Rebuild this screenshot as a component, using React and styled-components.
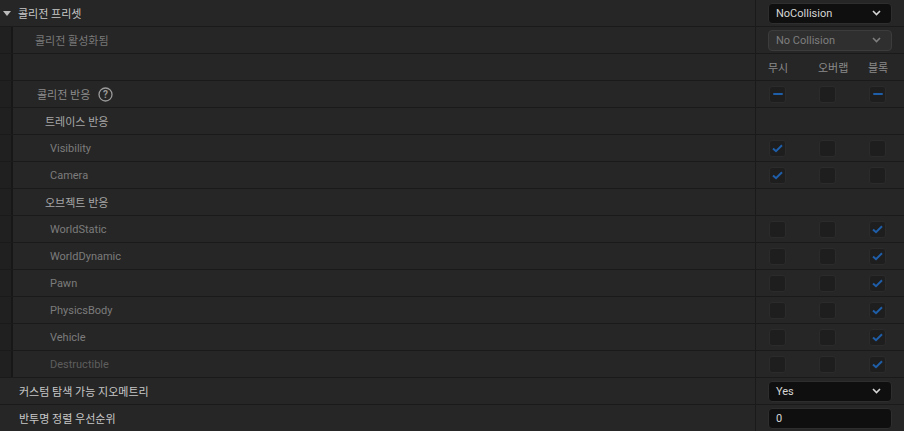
import React from "react";
import styled, { createGlobalStyle } from "styled-components";

const GlobalStyle = createGlobalStyle`
  html, body {
    margin: 0;
    padding: 0;
    background: #262626;
    font-family: "Roboto", "Noto Sans CJK KR", "Noto Sans", sans-serif;
  }
`;

const Panel = styled.div`
  width: 904px;
  height: 431px;
  overflow: hidden;
  background: #262626;
`;

const Row = styled.div`
  display: grid;
  grid-template-columns: 755px 1px 1fr;
  height: 26px;
  border-bottom: 1px solid #1a1a1a;
`;

const NameCell = styled.div`
  display: flex;
  align-items: center;
  min-width: 0;
`;

const Indent = styled.div`
  width: 11px;
  align-self: stretch;
  background: #202020;
  border-right: 2px solid #171717;
  flex-shrink: 0;
`;

const Label = styled.span`
  font-size: 11px;
  color: ${(p) => p.$color || "#c8c8c8"};
  padding-left: ${(p) => p.$pad}px;
  display: flex;
  align-items: center;
  gap: 8px;
  white-space: nowrap;
`;

const Divider = styled.div`
  background: #1a1a1a;
`;

const ValueCell = styled.div`
  display: flex;
  align-items: center;
  padding-left: 12px;
`;

const Arrow = styled.span`
  width: 0;
  height: 0;
  margin-left: 3px;
  border-left: 4.5px solid transparent;
  border-right: 4.5px solid transparent;
  border-top: 5px solid #bcbcbc;
`;

const Combo = styled.div`
  width: 124px;
  height: 21px;
  box-sizing: border-box;
  border-radius: 4px;
  border: 1px solid ${(p) => (p.$disabled ? "#3c3c3c" : "#2e2e2e")};
  background: ${(p) => (p.$disabled ? "#2f2f2f" : "#0f0f0f")};
  color: ${(p) => (p.$disabled ? "#7e7e7e" : "#d6d6d6")};
  font-size: 11px;
  display: flex;
  align-items: center;
  justify-content: space-between;
  padding: 0 10px 0 7px;
`;

const Chevron = ({ color }) => (
  <svg width="9" height="6" viewBox="0 0 9 6">
    <path d="M1 1 L4.5 4.5 L8 1" fill="none" stroke={color} strokeWidth="1.6" />
  </svg>
);

const HeadGrid = styled.div`
  display: grid;
  grid-template-columns: repeat(3, 50px);
  font-size: 11px;
  color: #8a8a8a;
`;

const BoxGrid = styled.div`
  display: grid;
  grid-template-columns: repeat(3, 50px);
  padding-left: 1px;
`;

const Box = styled.div`
  width: 17px;
  height: 17px;
  box-sizing: border-box;
  border-radius: 3px;
  background: #1e1e1e;
  border: 1px solid #2b2b2b;
  display: flex;
  align-items: center;
  justify-content: center;
`;

const Check = () => (
  <svg width="11" height="9" viewBox="0 0 11 9">
    <path d="M1 4.5 L4 7.2 L10 1.2" fill="none" stroke="#1f5ea8" strokeWidth="2" />
  </svg>
);

const Minus = styled.span`
  width: 10px;
  height: 2px;
  background: #1f5ea8;
  border-radius: 1px;
`;

const HelpIcon = () => (
  <svg width="15" height="15" viewBox="0 0 15 15">
    <circle cx="7.5" cy="7.5" r="6.5" fill="none" stroke="#9a9a9a" strokeWidth="1.3" />
    <text x="7.5" y="11" textAnchor="middle" fontSize="10" fontWeight="bold" fill="#9a9a9a" fontFamily="Roboto, sans-serif">?</text>
  </svg>
);

const Input = styled.div`
  width: 124px;
  height: 21px;
  box-sizing: border-box;
  border-radius: 4px;
  border: 1px solid #2e2e2e;
  background: #0f0f0f;
  color: #d6d6d6;
  font-size: 11px;
  display: flex;
  align-items: center;
  padding-left: 7px;
`;

const Mark = ({ v }) => (
  <Box>{v === "c" ? <Check /> : v === "m" ? <Minus /> : null}</Box>
);

const Checks = ({ values }) => (
  <BoxGrid>
    {values.map((v, i) => (
      <Mark key={i} v={v} />
    ))}
  </BoxGrid>
);

const channels = [
  { name: "Visibility", v: ["c", "", ""] },
  { name: "Camera", v: ["c", "", ""] },
];

const objects = [
  "WorldStatic",
  "WorldDynamic",
  "Pawn",
  "PhysicsBody",
  "Vehicle",
  "Destructible",
];

const Nested = ({ children, value }) => (
  <Row>
    <NameCell>
      <Indent />
      {children}
    </NameCell>
    <Divider />
    <ValueCell>{value}</ValueCell>
  </Row>
);

export default function App() {
  return (
    <Panel>
      <GlobalStyle />
      <Row>
        <NameCell>
          <Arrow />
          <Label $pad={7}>콜리전 프리셋</Label>
        </NameCell>
        <Divider />
        <ValueCell>
          <Combo>
            NoCollision <Chevron color="#d6d6d6" />
          </Combo>
        </ValueCell>
      </Row>
      <Nested
        value={
          <Combo $disabled>
            No Collision <Chevron color="#7e7e7e" />
          </Combo>
        }
      >
        <Label $pad={22} $color="#7a7a7a">콜리전 활성화됨</Label>
      </Nested>
      <Nested
        value={
          <HeadGrid>
            <span>무시</span>
            <span>오버랩</span>
            <span>블록</span>
          </HeadGrid>
        }
      />
      <Nested value={<Checks values={["m", "", "m"]} />}>
        <Label $pad={24} $color="#8c8c8c">
          콜리전 반응 <HelpIcon />
        </Label>
      </Nested>
      <Nested>
        <Label $pad={32} $color="#a8a8a8">트레이스 반응</Label>
      </Nested>
      {channels.map((c) => (
        <Nested key={c.name} value={<Checks values={c.v} />}>
          <Label $pad={37} $color="#7c7c7c">{c.name}</Label>
        </Nested>
      ))}
      <Nested>
        <Label $pad={32} $color="#a8a8a8">오브젝트 반응</Label>
      </Nested>
      {objects.map((o) => (
        <Nested key={o} value={<Checks values={["", "", "c"]} />}>
          <Label $pad={37} $color={o === "Destructible" ? "#5e5e5e" : "#7c7c7c"}>{o}</Label>
        </Nested>
      ))}
      <Row>
        <NameCell>
          <Label $pad={19}>커스텀 탐색 가능 지오메트리</Label>
        </NameCell>
        <Divider />
        <ValueCell>
          <Combo>
            Yes <Chevron color="#d6d6d6" />
          </Combo>
        </ValueCell>
      </Row>
      <Row>
        <NameCell>
          <Label $pad={19}>반투명 정렬 우선순위</Label>
        </NameCell>
        <Divider />
        <ValueCell>
          <Input>0</Input>
        </ValueCell>
      </Row>
    </Panel>
  );
}
